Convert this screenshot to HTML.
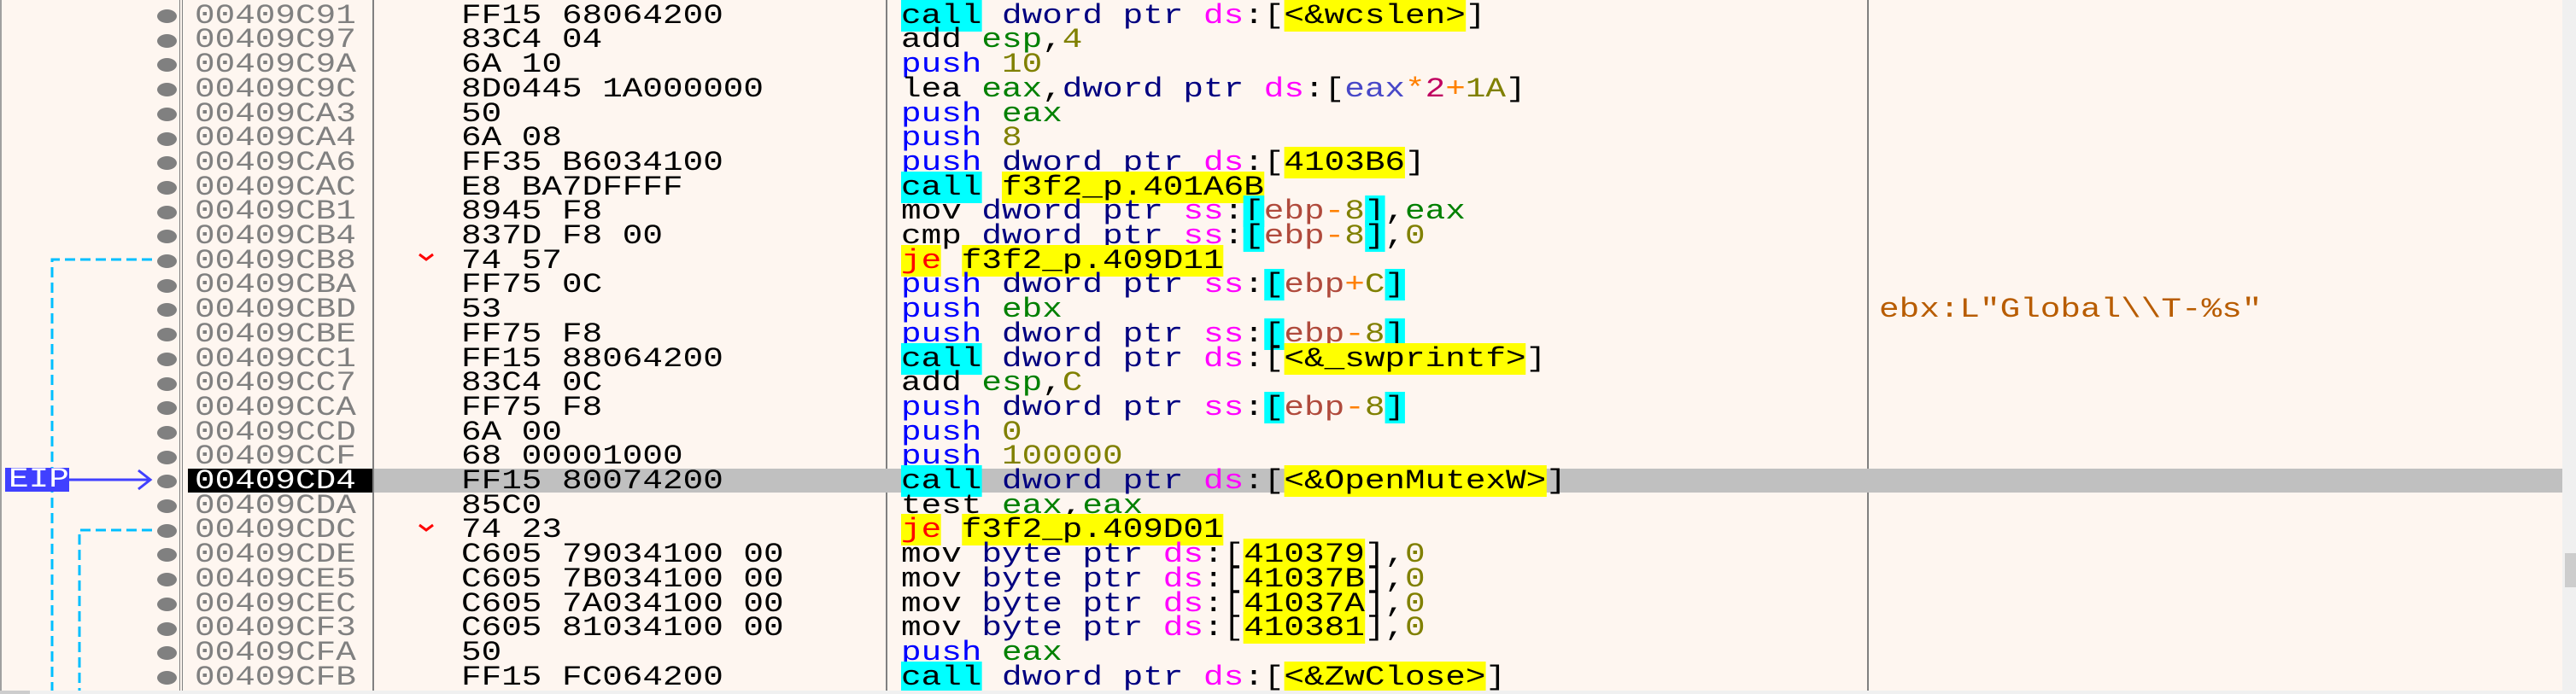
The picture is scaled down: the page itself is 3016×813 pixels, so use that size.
<!DOCTYPE html>
<html><head><meta charset="utf-8"><style>
*{margin:0;padding:0}
body{width:3016px;height:813px;background:#f0f0f0;position:relative;overflow:hidden;font-family:"Liberation Mono",monospace}
#panel{position:absolute;left:0;top:0;width:3000px;height:809px;background:#fef6f0;overflow:hidden}
.col{position:absolute;transform:scaleX(1.229);transform-origin:0 0;white-space:pre;font-size:32px;line-height:28.7px;height:28.7px}
.a{color:#808080}
.b{color:#000}
.k{color:#000}
.p{color:#0000ff}
.c{background:#00ffff;color:#000}
.j{background:#ffff00;color:#ff0000}
.r{color:#008000}
.n{color:#808000}
.d{color:#000080}
.s{color:#ff00ff}
.y{background:#ffff00;color:#000}
.cb{background:#00ffff;color:#000}
.bp{color:#b04a3c}
.o{color:#ff8000}
.q{color:#4848c8}
.t{color:#c00060}
.cm{color:#b85c00}
.dot{position:absolute;left:184px;width:23px;height:16px;border-radius:50%;background:#808080}
.vl{position:absolute;top:0;height:809px;background:#808080}
</style></head><body>
<div id="panel">
<div style="position:absolute;left:0;top:0;width:2px;height:809px;background:#a0a0a0"></div>
<div class="vl" style="left:210px;width:1px"></div>
<div class="vl" style="left:213px;width:1px"></div>
<div class="vl" style="left:436px;width:2px"></div>
<div class="vl" style="left:1037px;width:2px"></div>
<div class="vl" style="left:2186px;width:2px"></div>
<div style="position:absolute;left:438px;top:549px;width:2562px;height:28px;background:#c0c0c0"></div>
<div style="position:absolute;left:220px;top:549px;width:216px;height:28px;background:#000"></div>
<svg width="3000" height="809" style="position:absolute;left:0;top:0">
<g stroke="#00bfff" stroke-width="3" fill="none" stroke-dasharray="12 6">
<path d="M178 304 H61 V809"/>
<path d="M178 621 H93 V809"/>
</g>
<g stroke="#ff0000" stroke-width="3" fill="none">
<polyline points="491,298 499,304 507,298"/>
<polyline points="491,615 499,621 507,615"/>
</g>
<rect x="6" y="548" width="75" height="28" fill="#4040ff"/>
<path d="M81 562 H176" stroke="#4040ff" stroke-width="3"/>
<polyline points="162,551 176,562 162,573" stroke="#4040ff" stroke-width="3" fill="none"/>
</svg>
<div class="col" style="left:10px;top:548px;color:#fff">EIP</div>

<div class="dot" style="top:11px"></div><div class="col a" style="left:228px;top:4.7px">00409C91</div><div class="col b" style="left:540px;top:4.7px">FF15 68064200</div><div class="col" style="left:1055px;top:4.7px"><span class="c">call</span> <span class="d">dword ptr</span> <span class="s">ds</span>:[<span class="y">&lt;&amp;wcslen&gt;</span>]</div>
<div class="dot" style="top:39.7px"></div><div class="col a" style="left:228px;top:33.4px">00409C97</div><div class="col b" style="left:540px;top:33.4px">83C4 04</div><div class="col" style="left:1055px;top:33.4px"><span class="k">add</span> <span class="r">esp</span>,<span class="n">4</span></div>
<div class="dot" style="top:68.4px"></div><div class="col a" style="left:228px;top:62.1px">00409C9A</div><div class="col b" style="left:540px;top:62.1px">6A 10</div><div class="col" style="left:1055px;top:62.1px"><span class="p">push</span> <span class="n">10</span></div>
<div class="dot" style="top:97.1px"></div><div class="col a" style="left:228px;top:90.8px">00409C9C</div><div class="col b" style="left:540px;top:90.8px">8D0445 1A000000</div><div class="col" style="left:1055px;top:90.8px"><span class="k">lea</span> <span class="r">eax</span>,<span class="d">dword ptr</span> <span class="s">ds</span>:[<span class="q">eax</span><span class="o">*</span><span class="t">2</span><span class="o">+</span><span class="n">1A</span>]</div>
<div class="dot" style="top:125.8px"></div><div class="col a" style="left:228px;top:119.5px">00409CA3</div><div class="col b" style="left:540px;top:119.5px">50</div><div class="col" style="left:1055px;top:119.5px"><span class="p">push</span> <span class="r">eax</span></div>
<div class="dot" style="top:154.5px"></div><div class="col a" style="left:228px;top:148.2px">00409CA4</div><div class="col b" style="left:540px;top:148.2px">6A 08</div><div class="col" style="left:1055px;top:148.2px"><span class="p">push</span> <span class="n">8</span></div>
<div class="dot" style="top:183.2px"></div><div class="col a" style="left:228px;top:176.9px">00409CA6</div><div class="col b" style="left:540px;top:176.9px">FF35 B6034100</div><div class="col" style="left:1055px;top:176.9px"><span class="p">push</span> <span class="d">dword ptr</span> <span class="s">ds</span>:[<span class="y">4103B6</span>]</div>
<div class="dot" style="top:211.9px"></div><div class="col a" style="left:228px;top:205.6px">00409CAC</div><div class="col b" style="left:540px;top:205.6px">E8 BA7DFFFF</div><div class="col" style="left:1055px;top:205.6px"><span class="c">call</span> <span class="y">f3f2_p.401A6B</span></div>
<div class="dot" style="top:240.6px"></div><div class="col a" style="left:228px;top:234.3px">00409CB1</div><div class="col b" style="left:540px;top:234.3px">8945 F8</div><div class="col" style="left:1055px;top:234.3px"><span class="k">mov</span> <span class="d">dword ptr</span> <span class="s">ss</span>:<span class="cb">[</span><span class="bp">ebp</span><span class="o">-</span><span class="n">8</span><span class="cb">]</span>,<span class="r">eax</span></div>
<div class="dot" style="top:269.3px"></div><div class="col a" style="left:228px;top:263px">00409CB4</div><div class="col b" style="left:540px;top:263px">837D F8 00</div><div class="col" style="left:1055px;top:263px"><span class="k">cmp</span> <span class="d">dword ptr</span> <span class="s">ss</span>:<span class="cb">[</span><span class="bp">ebp</span><span class="o">-</span><span class="n">8</span><span class="cb">]</span>,<span class="n">0</span></div>
<div class="dot" style="top:298px"></div><div class="col a" style="left:228px;top:291.7px">00409CB8</div><div class="col b" style="left:540px;top:291.7px">74 57</div><div class="col" style="left:1055px;top:291.7px"><span class="j">je</span> <span class="y">f3f2_p.409D11</span></div>
<div class="dot" style="top:326.7px"></div><div class="col a" style="left:228px;top:320.4px">00409CBA</div><div class="col b" style="left:540px;top:320.4px">FF75 0C</div><div class="col" style="left:1055px;top:320.4px"><span class="p">push</span> <span class="d">dword ptr</span> <span class="s">ss</span>:<span class="cb">[</span><span class="bp">ebp</span><span class="o">+</span><span class="n">C</span><span class="cb">]</span></div>
<div class="dot" style="top:355.4px"></div><div class="col a" style="left:228px;top:349.1px">00409CBD</div><div class="col b" style="left:540px;top:349.1px">53</div><div class="col" style="left:1055px;top:349.1px"><span class="p">push</span> <span class="r">ebx</span></div><div class="col cm" style="left:2200px;top:349.1px">ebx:L"Global\\T-%s"</div>
<div class="dot" style="top:384.1px"></div><div class="col a" style="left:228px;top:377.8px">00409CBE</div><div class="col b" style="left:540px;top:377.8px">FF75 F8</div><div class="col" style="left:1055px;top:377.8px"><span class="p">push</span> <span class="d">dword ptr</span> <span class="s">ss</span>:<span class="cb">[</span><span class="bp">ebp</span><span class="o">-</span><span class="n">8</span><span class="cb">]</span></div>
<div class="dot" style="top:412.8px"></div><div class="col a" style="left:228px;top:406.5px">00409CC1</div><div class="col b" style="left:540px;top:406.5px">FF15 88064200</div><div class="col" style="left:1055px;top:406.5px"><span class="c">call</span> <span class="d">dword ptr</span> <span class="s">ds</span>:[<span class="y">&lt;&amp;_swprintf&gt;</span>]</div>
<div class="dot" style="top:441.5px"></div><div class="col a" style="left:228px;top:435.2px">00409CC7</div><div class="col b" style="left:540px;top:435.2px">83C4 0C</div><div class="col" style="left:1055px;top:435.2px"><span class="k">add</span> <span class="r">esp</span>,<span class="n">C</span></div>
<div class="dot" style="top:470.2px"></div><div class="col a" style="left:228px;top:463.9px">00409CCA</div><div class="col b" style="left:540px;top:463.9px">FF75 F8</div><div class="col" style="left:1055px;top:463.9px"><span class="p">push</span> <span class="d">dword ptr</span> <span class="s">ss</span>:<span class="cb">[</span><span class="bp">ebp</span><span class="o">-</span><span class="n">8</span><span class="cb">]</span></div>
<div class="dot" style="top:498.9px"></div><div class="col a" style="left:228px;top:492.6px">00409CCD</div><div class="col b" style="left:540px;top:492.6px">6A 00</div><div class="col" style="left:1055px;top:492.6px"><span class="p">push</span> <span class="n">0</span></div>
<div class="dot" style="top:527.6px"></div><div class="col a" style="left:228px;top:521.3px">00409CCF</div><div class="col b" style="left:540px;top:521.3px">68 00001000</div><div class="col" style="left:1055px;top:521.3px"><span class="p">push</span> <span class="n">100000</span></div>
<div class="dot" style="top:556.3px"></div><div class="col" style="left:228px;top:550px;color:#fff">00409CD4</div><div class="col b" style="left:540px;top:550px">FF15 80074200</div><div class="col" style="left:1055px;top:550px"><span class="c">call</span> <span class="d">dword ptr</span> <span class="s">ds</span>:[<span class="y">&lt;&amp;OpenMutexW&gt;</span>]</div>
<div class="dot" style="top:585px"></div><div class="col a" style="left:228px;top:578.7px">00409CDA</div><div class="col b" style="left:540px;top:578.7px">85C0</div><div class="col" style="left:1055px;top:578.7px"><span class="k">test</span> <span class="r">eax</span>,<span class="r">eax</span></div>
<div class="dot" style="top:613.7px"></div><div class="col a" style="left:228px;top:607.4px">00409CDC</div><div class="col b" style="left:540px;top:607.4px">74 23</div><div class="col" style="left:1055px;top:607.4px"><span class="j">je</span> <span class="y">f3f2_p.409D01</span></div>
<div class="dot" style="top:642.4px"></div><div class="col a" style="left:228px;top:636.1px">00409CDE</div><div class="col b" style="left:540px;top:636.1px">C605 79034100 00</div><div class="col" style="left:1055px;top:636.1px"><span class="k">mov</span> <span class="d">byte ptr</span> <span class="s">ds</span>:[<span class="y">410379</span>],<span class="n">0</span></div>
<div class="dot" style="top:671.1px"></div><div class="col a" style="left:228px;top:664.8px">00409CE5</div><div class="col b" style="left:540px;top:664.8px">C605 7B034100 00</div><div class="col" style="left:1055px;top:664.8px"><span class="k">mov</span> <span class="d">byte ptr</span> <span class="s">ds</span>:[<span class="y">41037B</span>],<span class="n">0</span></div>
<div class="dot" style="top:699.8px"></div><div class="col a" style="left:228px;top:693.5px">00409CEC</div><div class="col b" style="left:540px;top:693.5px">C605 7A034100 00</div><div class="col" style="left:1055px;top:693.5px"><span class="k">mov</span> <span class="d">byte ptr</span> <span class="s">ds</span>:[<span class="y">41037A</span>],<span class="n">0</span></div>
<div class="dot" style="top:728.5px"></div><div class="col a" style="left:228px;top:722.2px">00409CF3</div><div class="col b" style="left:540px;top:722.2px">C605 81034100 00</div><div class="col" style="left:1055px;top:722.2px"><span class="k">mov</span> <span class="d">byte ptr</span> <span class="s">ds</span>:[<span class="y">410381</span>],<span class="n">0</span></div>
<div class="dot" style="top:757.2px"></div><div class="col a" style="left:228px;top:750.9px">00409CFA</div><div class="col b" style="left:540px;top:750.9px">50</div><div class="col" style="left:1055px;top:750.9px"><span class="p">push</span> <span class="r">eax</span></div>
<div class="dot" style="top:785.9px"></div><div class="col a" style="left:228px;top:779.6px">00409CFB</div><div class="col b" style="left:540px;top:779.6px">FF15 FC064200</div><div class="col" style="left:1055px;top:779.6px"><span class="c">call</span> <span class="d">dword ptr</span> <span class="s">ds</span>:[<span class="y">&lt;&amp;ZwClose&gt;</span>]</div>
</div>
<div style="position:absolute;left:3003px;top:648px;width:13px;height:40px;background:#cdcdcd"></div>
<div style="position:absolute;left:0;top:809px;width:35px;height:4px;background:#cdcdcd"></div>
</body></html>
